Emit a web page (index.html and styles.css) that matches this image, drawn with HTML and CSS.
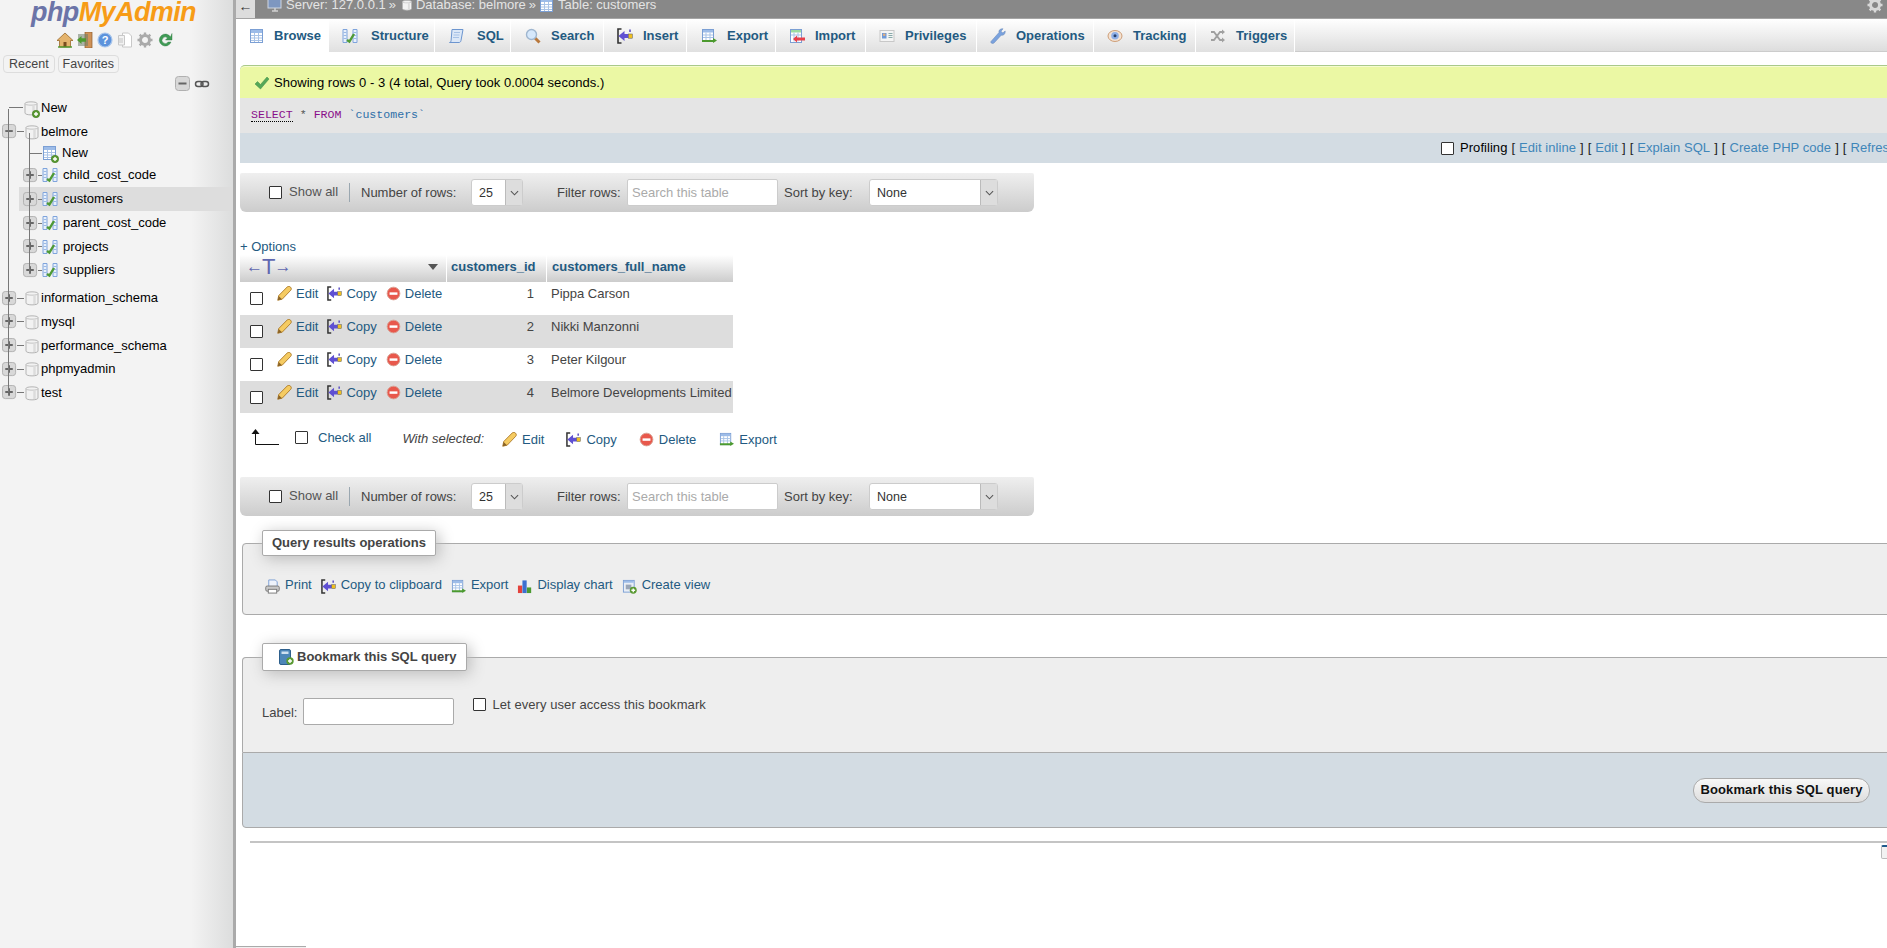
FILE: index.html
```html
<!DOCTYPE html>
<html lang="en">
<head>
<meta charset="utf-8">
<title>phpMyAdmin</title>
<link rel="stylesheet" href="styles.css">
</head>
<body>
<svg class="defs" width="0" height="0">
  <defs>
    <symbol id="plus" viewBox="0 0 16 16"><circle cx="12" cy="12" r="3.7" fill="#5a9a32" stroke="#3f7a20" stroke-width=".6"/><path d="M10 12h4M12 10v4" stroke="#fff" stroke-width="1.4"/></symbol>
    <symbol id="db" viewBox="0 0 16 16"><path d="M2 3.500C2 1.300 14 1.300 14 3.500V13C14 15.500 2 15.500 2 13Z" fill="#f2f2f2" stroke="#b4b4b4"/><path d="M2 3.800C2 5.600 14 5.600 14 3.800" fill="none" stroke="#c4c4c4"/><path d="M10.500 5.500v8.500" stroke="#dcdcdc" stroke-width="2.500"/></symbol>
    <symbol id="minus" viewBox="0 0 16 16"><rect x=".5" y=".5" width="14" height="14" rx="3" fill="#d8d8d8" stroke="#b0b0b0"/><path d="M3.500 7.500h8" stroke="#666" stroke-width="2"/></symbol>
    <symbol id="pls" viewBox="0 0 16 16"><rect x=".5" y=".5" width="14" height="14" rx="3" fill="#d8d8d8" stroke="#b0b0b0"/><path d="M3.500 7.500h8M7.500 3.500v8" stroke="#666" stroke-width="2"/></symbol>
    <symbol id="tbl" viewBox="0 0 16 16"><rect x="1.500" y="1.500" width="12" height="13" fill="#fff" stroke="#7b9fd4"/><path d="M2 2h11v3H2z" fill="#9dbce8"/><path d="M2 7.500h11M2 10h11M2 12.500h11M5.500 5v9M9.500 5v9" stroke="#a9c3e6"/></symbol>
    <symbol id="struct" viewBox="0 0 16 16"><path d="M1 1.500h4v13H1zM11 1.500h4v13h-4z" fill="#e8f0fb" stroke="#7fa4dc"/><path d="M1.500 4.500h3M1.500 7.500h3M1.500 10.500h3M11.500 4.500h3M11.500 7.500h3M11.500 10.500h3" stroke="#9bb9e4"/><path d="M5 12l2.400 1.600L12 6" fill="none" stroke="#4f9a35" stroke-width="2.400"/></symbol>
    <symbol id="sql" viewBox="0 0 16 16"><path d="M4 1.500h11l-2 11c-.3 1.400-1 2-2 2H1.500c1 0 1.500-.8 1.600-2Z" fill="#dbe7f7" stroke="#6c95cf"/><path d="M6 4.500h6M5.500 7h6M5 9.500h6" stroke="#a6c1e6"/></symbol>
    <symbol id="search" viewBox="0 0 16 16"><path d="M9.500 9.500l5 5" stroke="#b9783c" stroke-width="3"/><circle cx="6.500" cy="6.500" r="5" fill="#d6e8fb" stroke="#9fb6cf" stroke-width="1.400"/></symbol>
    <symbol id="insert" viewBox="0 0 16 16"><path d="M4.500 1H1v14h3.500" fill="none" stroke="#333" stroke-width="1.600"/><path d="M1.500 8l6-5v3h4v4h-4v3Z" fill="#5f50d2"/><rect x="11.500" y="6" width="3.800" height="4.200" fill="#f0c020" stroke="#555" stroke-width=".5"/><path d="M13 1.500v2.500" stroke="#5b4fc4" stroke-width="1.600"/></symbol>
    <symbol id="export" viewBox="0 0 16 16"><rect x="1.500" y="1.500" width="11" height="12" fill="#fff" stroke="#7b9fd4"/><path d="M2 2h10v2.500H2z" fill="#9dbce8"/><path d="M2 7h10M2 9.500h10M5 4.500v9M9 4.500v9" stroke="#a9c3e6"/><path d="M1 12h11V10l4 2.500L12 15v-1H1Z" fill="#4c9a2f"/></symbol>
    <symbol id="import" viewBox="0 0 16 16"><rect x="1.500" y="1.500" width="11" height="13" fill="#fff" stroke="#7b9fd4"/><path d="M2 2h10v2.500H2z" fill="#9ddca0"/><path d="M2 7h10M5 4.500v9M9 4.500v9" stroke="#a9c3e6"/><path d="M16 9.500H8V7.500l-4 3.500 4 3.500V12.500h8Z" fill="#e8404a"/></symbol>
    <symbol id="card" viewBox="0 0 16 16"><rect x="1" y="2.500" width="14" height="11" fill="#f4f4f4" stroke="#c8c8c8"/><rect x="3" y="5" width="4.500" height="5.500" fill="#6f9ad8"/><circle cx="5.200" cy="6.800" r="1.300" fill="#e3b080"/><path d="M9.500 5.500h4M9.500 7.500h4M9.500 9.500h4" stroke="#8aa"/></symbol>
    <symbol id="wrench" viewBox="0 0 16 16"><path d="M1 13.500 9 4.500C8.500 2.500 10 .5 13 .8L11 3.200 12.800 5 15.200 3c.3 3-1.700 4.700-4 4.200L4 15c-1.500 1.200-4-.3-3-1.500Z" fill="#7aa2de" stroke="#6e8fbd" stroke-width=".6"/></symbol>
    <symbol id="eye" viewBox="0 0 16 16"><ellipse cx="8" cy="8" rx="7" ry="5.500" fill="#f3e2d3" stroke="#cf9f79"/><circle cx="8" cy="7.800" r="3.800" fill="#8fb0e8"/><circle cx="8" cy="7.800" r="1.500" fill="#27406e"/></symbol>
    <symbol id="shuffle" viewBox="0 0 16 16"><path d="M1 4h3l6 8h3M1 12h3l6-8h3" fill="none" stroke="#a0a0a0" stroke-width="1.800"/><path d="M12 1.500l3 2.500-3 2.500zM12 9.500l3 2.500-3 2.500z" fill="#a0a0a0"/></symbol>
    <symbol id="check" viewBox="0 0 16 16"><path d="M1 9l2.500-2.500L6.500 9.500 13 2l2 2-8.500 10Z" fill="#54a858" stroke="#3f8a45" stroke-width=".5"/></symbol>
    <symbol id="pencil" viewBox="0 0 16 16"><path d="M.8 15.200l1-5L11 .9c1-.8 2.500-.7 3.500.4 1 1 1 2.300.2 3.200L5.600 14Z" fill="#f5cb62" stroke="#a97424" stroke-width=".9"/><path d="M.8 15.200l1-4.500L5.300 14Z" fill="#8a6226"/></symbol>
    <symbol id="del" viewBox="0 0 16 16"><circle cx="8" cy="8" r="6.800" fill="#e8584c" stroke="#d9a093" stroke-width="1"/><rect x="3.800" y="6.800" width="8.400" height="2.600" fill="#fff"/></symbol>
    <symbol id="home" viewBox="0 0 16 16"><path d="M8 1 0 8.500h2.500V15h11V8.500H16Z" fill="#e4b36c" stroke="#9a6a2b" stroke-width=".8"/><path d="M6.500 15v-5h3v5z" fill="#7a4d1e"/><path d="M1 15h14" stroke="#4c9a2f" stroke-width="1.400"/></symbol>
    <symbol id="exit" viewBox="0 0 16 16"><rect x="8" y="0" width="7" height="16" fill="#cf9156" stroke="#8c5c2c" stroke-width=".7"/><rect x="1" y="2" width="10" height="12" fill="#6d7e6a" opacity=".55"/><path d="M0 8l4.500-4v2.200H9v3.600H4.500V12Z" fill="#4c9a2f"/></symbol>
    <symbol id="help" viewBox="0 0 16 16"><circle cx="8" cy="8" r="7" fill="#5d93dc" stroke="#a9c6ec" stroke-width="1.200"/><text x="8" y="12" text-anchor="middle" class="qm">?</text></symbol>
    <symbol id="docs" viewBox="0 0 16 16"><path d="M5.500 1h6l3 3v11h-9z" fill="#fff" stroke="#c8c8c8"/><path d="M1.500 3.500h6v9.500h-6z" fill="#f2f2f2" stroke="#c8c8c8"/><path d="M3 6v5M5 6v5" stroke="#c4c4c4"/></symbol>
    <symbol id="gear" viewBox="0 0 16 16"><circle cx="8" cy="8" r="4.500" fill="none" stroke="#aaa" stroke-width="3"/><path d="M8 .5v3M8 12.500v3M.5 8h3M12.500 8h3M2.700 2.700l2.100 2.100M11.200 11.200l2.100 2.100M2.700 13.300l2.100-2.100M11.200 4.800l2.100-2.100" stroke="#aaa" stroke-width="2.400"/></symbol>
    <symbol id="gearw" viewBox="0 0 16 16"><circle cx="8" cy="8" r="4.500" fill="none" stroke="#d8d8d8" stroke-width="3"/><path d="M8 .5v3M8 12.500v3M.5 8h3M12.500 8h3M2.700 2.700l2.100 2.100M11.200 11.200l2.100 2.100M2.700 13.300l2.100-2.100M11.200 4.800l2.100-2.100" stroke="#d8d8d8" stroke-width="2.400"/></symbol>
    <symbol id="reload" viewBox="0 0 16 16"><path d="M13.500 5A6 6 0 1 0 14 10H11A3.200 3.200 0 1 1 10.500 6L8.500 8H15V1.500Z" fill="#3f9a55" stroke="#2e7a40" stroke-width=".4"/></symbol>
    <symbol id="link" viewBox="0 0 16 16"><rect x="1.500" y="5.500" width="7.500" height="5" rx="2.500" fill="none" stroke="#555" stroke-width="1.500"/><rect x="7" y="5.500" width="7.500" height="5" rx="2.500" fill="none" stroke="#555" stroke-width="1.500"/></symbol>
    <symbol id="print" viewBox="0 0 16 16"><path d="M4 1h7l2 2v5H4z" fill="#eef3fb" stroke="#7b9fd4"/><rect x=".8" y="7.500" width="14.400" height="5.500" rx="1.500" fill="#c8c8c8" stroke="#777"/><rect x="3.500" y="11" width="9" height="4" fill="#fff" stroke="#777"/></symbol>
    <symbol id="chart" viewBox="0 0 16 16"><rect x="1" y="7" width="4.500" height="8" fill="#e3423c"/><rect x="5.800" y="1.500" width="4.500" height="13.500" fill="#3b6fd0"/><rect x="10.600" y="9" width="4.500" height="6" fill="#4a9a30"/></symbol>
    <symbol id="view" viewBox="0 0 16 16"><rect x="1.500" y="1.500" width="11.500" height="12.500" fill="#e9eef6" stroke="#7b9fd4"/><path d="M2 2h10.500v2H2z" fill="#9dbce8"/><rect x="4" y="6" width="6" height="5" fill="#9aa6b8"/><circle cx="12" cy="12" r="3.700" fill="#5a9a32"/><path d="M10 12h4M12 10v4" stroke="#fff" stroke-width="1.400"/></symbol>
    <symbol id="book" viewBox="0 0 16 16"><rect x="1.500" y=".5" width="11" height="15" rx="1.500" fill="#4d86b8" stroke="#2d5f8c"/><rect x="3.500" y="2.500" width="7" height="2.500" fill="#cfe0f0"/><circle cx="12" cy="12" r="3.700" fill="#5a9a32"/><path d="M10 12h4M12 10v4" stroke="#fff" stroke-width="1.400"/></symbol>
    <symbol id="monitor" viewBox="0 0 16 16"><rect x="1" y="1" width="13" height="10" fill="#7e97c0" stroke="#cfd6e0"/><path d="M5 14h6M8 11v3" stroke="#d0d0d0" stroke-width="1.600"/></symbol>
  </defs>
</svg>

<div class="page">
  <aside class="sidebar">
    <div class="logo"><span class="logo-php">php</span><span class="logo-my">MyAdmin</span></div>
    <div class="side-icons">
      <svg class="i16"><use href="#home"/></svg>
      <svg class="i16"><use href="#exit"/></svg>
      <svg class="i16"><use href="#help"/></svg>
      <svg class="i16"><use href="#docs"/></svg>
      <svg class="i16"><use href="#gear"/></svg>
      <svg class="i16"><use href="#reload"/></svg>
    </div>
    <div class="side-tabs"><span class="side-tab">Recent</span><span class="side-tab">Favorites</span></div>
    <div class="side-tools">
      <svg class="i16"><use href="#minus"/></svg>
      <svg class="i16"><use href="#link"/></svg>
    </div>
    <div class="tree">
      <div class="node node-first"><span class="stub stub-long"></span><span class="dbwrap"><svg class="i16"><use href="#db"/></svg><svg class="i16 badge"><use href="#plus"/></svg></span><span class="lbl">New</span></div>
      <div class="node"><svg class="i15"><use href="#minus"/></svg><span class="stub"></span><svg class="i16"><use href="#db"/></svg><span class="lbl">belmore</span></div>
      <div class="sub">
        <div class="leaf leaf-new"><span class="stub stub-new"></span><span class="dbwrap"><svg class="i16"><use href="#tbl"/></svg><svg class="i16 badge"><use href="#plus"/></svg></span><span class="lbl-sub lbl-new">New</span></div>
        <div class="leaf"><svg class="i15"><use href="#pls"/></svg><span class="stub stub-short"></span><svg class="i16"><use href="#struct"/></svg><span class="lbl-sub">child_cost_code</span></div>
        <div class="leaf leaf-active"><svg class="i15"><use href="#pls"/></svg><span class="stub stub-short"></span><svg class="i16"><use href="#struct"/></svg><span class="lbl-sub">customers</span></div>
        <div class="leaf"><svg class="i15"><use href="#pls"/></svg><span class="stub stub-short"></span><svg class="i16"><use href="#struct"/></svg><span class="lbl-sub">parent_cost_code</span></div>
        <div class="leaf"><svg class="i15"><use href="#pls"/></svg><span class="stub stub-short"></span><svg class="i16"><use href="#struct"/></svg><span class="lbl-sub">projects</span></div>
        <div class="leaf"><svg class="i15"><use href="#pls"/></svg><span class="stub stub-short"></span><svg class="i16"><use href="#struct"/></svg><span class="lbl-sub">suppliers</span></div>
      </div>
      <div class="dbs">
        <div class="node"><svg class="i15"><use href="#pls"/></svg><span class="stub"></span><svg class="i16"><use href="#db"/></svg><span class="lbl">information_schema</span></div>
        <div class="node"><svg class="i15"><use href="#pls"/></svg><span class="stub"></span><svg class="i16"><use href="#db"/></svg><span class="lbl">mysql</span></div>
        <div class="node"><svg class="i15"><use href="#pls"/></svg><span class="stub"></span><svg class="i16"><use href="#db"/></svg><span class="lbl">performance_schema</span></div>
        <div class="node"><svg class="i15"><use href="#pls"/></svg><span class="stub"></span><svg class="i16"><use href="#db"/></svg><span class="lbl">phpmyadmin</span></div>
        <div class="node"><svg class="i15"><use href="#pls"/></svg><span class="stub"></span><svg class="i16"><use href="#db"/></svg><span class="lbl">test</span></div>
      </div>
    </div>
  </aside>

  <main class="main">
    <div class="topbar">
      <span class="back">←</span>
      <div class="crumbs">
        <svg class="i16"><use href="#monitor"/></svg><span>Server: 127.0.0.1</span><span>»</span>
        <svg class="i14"><use href="#db"/></svg><span>Database: belmore</span><span>»</span>
        <svg class="i16"><use href="#tbl"/></svg><span>Table: customers</span>
      </div>
      <svg class="i16 top-gear"><use href="#gearw"/></svg>
    </div>

    <nav class="tabs">
      <a class="tab tab-active tab-browse"><svg class="i16"><use href="#tbl"/></svg>Browse</a>
      <a class="tab tab-structure"><svg class="i16"><use href="#struct"/></svg>Structure</a>
      <a class="tab tab-sql"><svg class="i16"><use href="#sql"/></svg>SQL</a>
      <a class="tab tab-search"><svg class="i16"><use href="#search"/></svg>Search</a>
      <a class="tab tab-insert"><svg class="i16"><use href="#insert"/></svg>Insert</a>
      <a class="tab tab-export"><svg class="i16"><use href="#export"/></svg>Export</a>
      <a class="tab tab-import"><svg class="i16"><use href="#import"/></svg>Import</a>
      <a class="tab tab-priv"><svg class="i16"><use href="#card"/></svg>Privileges</a>
      <a class="tab tab-ops"><svg class="i16"><use href="#wrench"/></svg>Operations</a>
      <a class="tab tab-track"><svg class="i16"><use href="#eye"/></svg>Tracking</a>
      <a class="tab tab-trig"><svg class="i16"><use href="#shuffle"/></svg>Triggers</a>
    </nav>

    <div class="content">
      <div class="success"><svg class="i16"><use href="#check"/></svg>Showing rows 0 - 3 (4 total, Query took 0.0004 seconds.)</div>
      <div class="sqlbox"><span class="kw kw-select">SELECT</span> <span class="star">*</span> <span class="kw">FROM</span> <span class="ident">`customers`</span></div>
      <div class="sqllinks"><input class="cb" type="checkbox"><span class="profiling">Profiling</span>
        <span class="brk">[</span> <a>Edit inline</a> <span class="brk">]</span> <span class="brk">[</span> <a>Edit</a> <span class="brk">]</span> <span class="brk">[</span> <a>Explain SQL</a> <span class="brk">]</span> <span class="brk">[</span> <a>Create PHP code</a> <span class="brk">]</span> <span class="brk">[</span> <a>Refresh</a> <span class="brk">]</span>
      </div>

      <div class="navbox">
        <input class="cb" type="checkbox"><span class="showall">Show all</span><span class="sep"></span>
        <span class="nrows">Number of rows:</span>
        <span class="select sel-rows"><span>25</span><span class="sel-arrow"><svg class="chev" viewBox="0 0 10 6"><path d="M1 1l4 4 4-4" fill="none" stroke="#555" stroke-width="1.200"/></svg></span></span>
        <span class="filter">Filter rows:</span>
        <input class="search-in" placeholder="Search this table">
        <span class="sortkey">Sort by key:</span>
        <span class="select sel-sort"><span>None</span><span class="sel-arrow"><svg class="chev" viewBox="0 0 10 6"><path d="M1 1l4 4 4-4" fill="none" stroke="#555" stroke-width="1.200"/></svg></span></span>
      </div>

      <a class="options">+ Options</a>

      <table class="data">
        <colgroup><col class="c1"><col class="c2"><col class="c3"></colgroup>
        <thead>
          <tr>
            <th class="th-act"><span class="thwrap"><span class="resize">←<span class="bigt">T</span>→</span><span class="tri"></span></span></th>
            <th>customers_id</th>
            <th>customers_full_name</th>
          </tr>
        </thead>
        <tbody>
          <tr>
            <td class="act"><div class="acts"><input class="cb" type="checkbox"><a class="a-edit"><svg class="i15"><use href="#pencil"/></svg>Edit</a><a class="a-copy"><svg class="i15"><use href="#insert"/></svg>Copy</a><a class="a-del"><svg class="i15"><use href="#del"/></svg>Delete</a></div></td>
            <td class="num">1</td><td class="name">Pippa Carson</td>
          </tr>
          <tr class="alt">
            <td class="act"><div class="acts"><input class="cb" type="checkbox"><a class="a-edit"><svg class="i15"><use href="#pencil"/></svg>Edit</a><a class="a-copy"><svg class="i15"><use href="#insert"/></svg>Copy</a><a class="a-del"><svg class="i15"><use href="#del"/></svg>Delete</a></div></td>
            <td class="num">2</td><td class="name">Nikki Manzonni</td>
          </tr>
          <tr>
            <td class="act"><div class="acts"><input class="cb" type="checkbox"><a class="a-edit"><svg class="i15"><use href="#pencil"/></svg>Edit</a><a class="a-copy"><svg class="i15"><use href="#insert"/></svg>Copy</a><a class="a-del"><svg class="i15"><use href="#del"/></svg>Delete</a></div></td>
            <td class="num">3</td><td class="name">Peter Kilgour</td>
          </tr>
          <tr class="alt">
            <td class="act"><div class="acts"><input class="cb" type="checkbox"><a class="a-edit"><svg class="i15"><use href="#pencil"/></svg>Edit</a><a class="a-copy"><svg class="i15"><use href="#insert"/></svg>Copy</a><a class="a-del"><svg class="i15"><use href="#del"/></svg>Delete</a></div></td>
            <td class="num">4</td><td class="name">Belmore Developments Limited</td>
          </tr>
        </tbody>
      </table>

      <div class="bulk">
        <svg class="arrow" viewBox="0 0 28 16"><path d="M4.500 15.500V3M4.500 15.500H28" fill="none" stroke="#111" stroke-width="1"/><path d="M.5 5 4.500 0l4 5Z" fill="#111"/></svg>
        <input class="cb" type="checkbox"><a class="checkall">Check all</a>
        <em class="withsel">With selected:</em>
        <a class="bulk-item b-edit"><svg class="i15"><use href="#pencil"/></svg>Edit</a>
        <a class="bulk-item b-copy"><svg class="i15"><use href="#insert"/></svg>Copy</a>
        <a class="bulk-item b-del"><svg class="i15"><use href="#del"/></svg>Delete</a>
        <a class="bulk-item b-exp"><svg class="i15"><use href="#export"/></svg>Export</a>
      </div>

      <div class="navbox">
        <input class="cb" type="checkbox"><span class="showall">Show all</span><span class="sep"></span>
        <span class="nrows">Number of rows:</span>
        <span class="select sel-rows"><span>25</span><span class="sel-arrow"><svg class="chev" viewBox="0 0 10 6"><path d="M1 1l4 4 4-4" fill="none" stroke="#555" stroke-width="1.200"/></svg></span></span>
        <span class="filter">Filter rows:</span>
        <input class="search-in" placeholder="Search this table">
        <span class="sortkey">Sort by key:</span>
        <span class="select sel-sort"><span>None</span><span class="sel-arrow"><svg class="chev" viewBox="0 0 10 6"><path d="M1 1l4 4 4-4" fill="none" stroke="#555" stroke-width="1.200"/></svg></span></span>
      </div>

      <fieldset class="fs fs-ops">
        <legend>Query results operations</legend>
        <div class="ops">
          <a><svg class="i15"><use href="#print"/></svg>Print</a>
          <a><svg class="i15"><use href="#insert"/></svg>Copy to clipboard</a>
          <a><svg class="i15"><use href="#export"/></svg>Export</a>
          <a><svg class="i15"><use href="#chart"/></svg>Display chart</a>
          <a><svg class="i15"><use href="#view"/></svg>Create view</a>
        </div>
      </fieldset>

      <fieldset class="fs fs-book">
        <legend><svg class="i16"><use href="#book"/></svg>Bookmark this SQL query</legend>
        <div class="bookrow">
          <label class="lab">Label:</label><input class="labelin">
          <input class="cb cb-share" type="checkbox"><span class="share">Let every user access this bookmark</span>
        </div>
      </fieldset>
      <div class="tfoot"><button class="btn" type="button">Bookmark this SQL query</button></div>

      <div class="rule"></div>
      <div class="tiny"></div>
    </div>
  </main>
</div>
<div class="console-tab"></div>
</body>
</html>
```
FILE: styles.css
```css
* { box-sizing: border-box; }
html, body { margin: 0; height: 948px; overflow: hidden; background: #fff; }
body { font: 13px/16px "Liberation Sans", Arial, sans-serif; color: #444; }
a { color: #235a81; text-decoration: none; }
.defs { position: absolute; }
.qm { font: bold 11px "Liberation Sans", sans-serif; fill: #fff; }

svg { flex: none; display: block; }
.i16 { width: 16px; height: 16px; }
.i15 { width: 15px; height: 15px; }
.i14 { width: 14px; height: 14px; }

.page { display: flex; width: 1960px; height: 948px; }

/* sidebar */
.sidebar {
  flex: 0 0 236px; height: 948px; overflow: hidden;
  background: linear-gradient(to right, #f3f3f3 82%, #dcdddd 100%);
  background-size: 233px 100%; background-repeat: no-repeat;
  border-right: 3px solid #aaa; color: #000;
}
.logo { height: 29px; padding-left: 31px; font: italic bold 27px/24px "Liberation Sans", sans-serif; letter-spacing: -.6px; white-space: nowrap; }
.logo-php { color: #6b74a8; }
.logo-my { color: #f79c17; }
.side-icons { display: flex; gap: 4px; padding: 3px 0 0 57px; height: 24px; }
.side-tabs { display: flex; gap: 3px; margin-top: 2px; padding-left: 3px; height: 18px; }
.side-tab { border: 1px solid #ddd; border-radius: 4px; padding: 0 5px; line-height: 16px; color: #444; font-size: 12.500px; }
.side-tab + .side-tab { padding: 0 4px; }
.side-tools { display: flex; gap: 3px; padding: 3px 0 0 175px; height: 22px; }
.tree { position: relative; padding-top: 1px; }
.tree::before { content: ""; position: absolute; left: 8px; top: 14px; height: 283px; border-left: 1px solid #777; }
.node, .leaf { display: flex; align-items: center; white-space: nowrap; }
.node { height: 23.700px; padding-left: 2px; }
.node-first { padding-left: 9px; }
.leaf { height: 23.500px; padding-left: 23px; }
.leaf-new { height: 20px; padding-left: 30px; }
.leaf-active { background: #ddd; margin-left: 19px; padding-left: 4px; height: 24.500px; }
.sub { position: relative; }
.sub::before { content: ""; position: absolute; left: 29px; top: -10px; height: 138px; border-left: 1px solid #777; }
.dbs { margin-top: 4.500px; }
.stub { width: 7px; border-top: 1px solid #777; flex: none; }
.stub-long { width: 14px; }
.stub-new { width: 12px; }
.stub-short { width: 4px; }
.dbwrap { position: relative; display: block; flex: none; width: 16px; height: 16px; }
.badge { position: absolute; left: 1px; top: 2px; }
.lbl { margin-left: 2px; }
.i15 + .stub + .i16 + .lbl { margin-left: 1px; }
.lbl-sub { margin-left: 5px; }
.lbl-new { margin-left: 4px; }

/* main */
.main { flex: 0 0 1724px; min-width: 0; }
.topbar { height: 19px; background: #888; border-bottom: 1px solid #a5a5a5; display: flex; overflow: hidden; color: #e4e4e4; }
.back { width: 19px; height: 18px; background: #ddd; color: #333; text-align: center; line-height: 13px; font-size: 14px; flex: none; }
.crumbs { display: flex; gap: 3px; margin: -3px 0 0 12px; height: 16px; white-space: nowrap; }
.crumbs .i14 { width: 12px; margin-left: 2px; margin-top: 1px; }
.top-gear { margin: -3px 77px 0 auto; }

.tabs { display: flex; height: 33px; background: linear-gradient(#fff, #ddd); border-bottom: 1px solid #ccc; font-weight: bold; color: #235a81; }
.tab { display: flex; align-items: center; gap: 10px; height: 33px; padding-left: 13px; border-right: 1px solid #fff; color: #235a81; background: linear-gradient(#fff, #e0e0e0); white-space: nowrap; }
.tab-browse { width: 93px; gap: 9px; }
.tab-structure { width: 106px; gap: 13px; }
.tab-sql { width: 76px; gap: 13px; }
.tab-search { width: 93px; padding-left: 14px; }
.tab-insert { width: 83px; }
.tab-export { width: 89px; padding-left: 14px; }
.tab-import { width: 90px; }
.tab-priv { width: 111px; }
.tab-ops { width: 117px; }
.tab-track { width: 102px; }
.tab-trig { width: 99px; padding-left: 14px; }
.tab-active { background: #fff; height: 34px; }

.content { padding: 13px 0 0 4px; }
.success { display: flex; align-items: center; gap: 4px; height: 33px; padding: 2px 0 0 14px; background: #ebf8a4; border-top: 1px solid #a9c98a; border-top-left-radius: 5px; box-shadow: inset 0 1px 0 #f6fccf; color: #000; letter-spacing: .04px; }
.sqlbox { height: 35px; background: #e5e5e5; padding: 9px 0 0 11px; font: 11.600px/16px "Liberation Mono", monospace; color: #555; white-space: pre; }
.kw { color: #8a0f8a; }
.kw-select { border-bottom: 1px dotted #000; }
.ident { color: #2e6fa8; }
.sqllinks { display: flex; align-items: center; gap: 4px; height: 30px; background: #d3dce3; padding-left: 1201px; white-space: pre; color: #111; letter-spacing: .05px; }
.sqllinks .cb { margin-right: 2px; }
.sqllinks a { color: #3f86b9; }
.profiling { color: #000; }
.brk { color: #222; }
.cb { appearance: none; -webkit-appearance: none; flex: none; width: 13px; height: 13px; margin: 0; border: 1px solid #333; background: #fff; border-radius: 1px; }

.navbox { display: flex; align-items: center; width: 794px; height: 39px; margin-top: 10px; padding-left: 29px; background: linear-gradient(#efefef, #ccc); border-radius: 2px 2px 6px 6px; white-space: nowrap; }
.navbox .cb { margin-top: -1px; }
.showall { margin: -2px 0 0 7px; color: #555; width: 47px; }
.sep { width: 1px; height: 19px; background: #9aa7b0; margin: 0 11px 0 13px; }
.nrows { width: 110px; }
.select { display: flex; height: 27px; background: #fff; border: 1px solid #ccc; border-radius: 3px; align-items: center; padding: 1px 0 0 7px; color: #333; font-size: 12.500px; }
.sel-rows { width: 52px; }
.sel-sort { width: 129px; margin-left: 25px; }
.sel-arrow { margin-left: auto; width: 17px; height: 25px; margin-top: -1px; background: #ddd; border-left: 1px solid #bbb; display: flex; align-items: center; justify-content: center; }
.chev { width: 9px; height: 6px; }
.filter { margin-left: 34px; width: 70px; }
.search-in { width: 151px; height: 27px; border: 1px solid #ccc; border-radius: 2px; padding: 0 4px; font: 13px "Liberation Sans", sans-serif; background: #fff; }
.search-in::placeholder { color: #aaa; }
.sortkey { margin-left: 6px; width: 60px; }

.options { display: block; margin-top: 27px; height: 16px; }

.data { border-collapse: separate; border-spacing: 0; table-layout: fixed; width: 493px; }
.c1 { width: 206px; }
.c2 { width: 100px; }
.c3 { width: 187px; }
.data th { height: 27px; padding: 0 0 4px 4px; text-align: left; color: #235a81; background: linear-gradient(#fff, #ccc); border-left: 1px solid #fff; }
.data th + th + th { padding-left: 5px; }
.data th.th-act { border-left: 0; padding: 0 0 3px; }
.thwrap { display: flex; align-items: center; justify-content: space-between; padding: 0 8px 0 6px; }
.resize { color: #6067b0; font-size: 17px; line-height: 18px; display: flex; align-items: center; font-weight: normal; }
.bigt { font-size: 22px; font-weight: normal; margin: 0 -1px; }
.tri { width: 0; height: 0; border: 5.500px solid transparent; border-top: 6px solid #555; border-bottom: 0; }
.data td { height: 33px; padding: 0; vertical-align: top; }
.data tr.alt td { background: #ddd; height: 32.500px; }
.acts { display: flex; padding: 3px 0 0 10px; }
.acts .cb { margin: 7px 14px 0 0; }
.acts a { display: flex; align-items: flex-start; gap: 4px; padding-top: 1px; }
.acts .a-copy { margin-left: 9px; }
.acts .a-del { margin-left: 9px; }
.num { text-align: right; padding: 4px 12px 0 0 !important; }
.name { padding: 4px 0 0 5px !important; white-space: nowrap; }

.bulk { display: flex; align-items: flex-start; height: 54px; padding: 16px 0 0 11px; white-space: nowrap; }
.arrow { width: 28px; height: 16px; }
.bulk .cb { margin: 2px 0 0 16px; }
.checkall { margin: 1px 0 0 10px; }
.withsel { margin: 2px 0 0 31px; color: #444; }
.bulk-item { display: flex; gap: 5px; margin-top: 3px; }
.b-edit { margin-left: 18px; }
.b-copy { margin-left: 22px; }
.b-del { margin-left: 22px; }
.b-exp { margin-left: 23px; }

.fs { margin: 14px 0 0 2px; min-width: 0; border: 1px solid #aaa; background: #eee; border-radius: 4px 0 0 4px; padding: 0 0 0 19px; }
.fs legend { display: flex; align-items: center; gap: 3px; margin: 0; padding: 0 9px; height: 26px; background: #fff; border: 1px solid #aaa; border-radius: 2px; font-weight: bold; box-shadow: 3px 3px 15px #bbb; color: #444; }
.ops { display: flex; gap: 9px; padding: 21px 0 19px 3px; height: 58px; }
.ops a { display: flex; gap: 5px; height: 18px; }
.ops svg { margin-top: 2px; }
.fs-book { margin-top: 28px; border-bottom: 0; border-radius: 4px 0 0 0; }
.fs-book legend { height: 28px; padding: 0 10px 0 15px; }
.bookrow { display: flex; align-items: flex-start; padding: 27px 0 27px 0; height: 81px; }
.lab { margin: 7px 6px 0 0; }
.labelin { width: 151px; height: 27px; border: 1px solid #aaa; border-radius: 2px; background: #fff; }
.cb-share { margin-left: 19px; }
.share { margin: -1px 0 0 6px; letter-spacing: .07px; }
.tfoot { display: flex; justify-content: flex-end; align-items: center; height: 76px; margin-left: 2px; padding-right: 89px; background: #d3dce3; border: 1px solid #aaa; border-radius: 0 0 0 4px; }
.btn { width: 177px; height: 25px; padding: 0; border: 1px solid #aaa; border-radius: 12px; background: linear-gradient(#f8f8f8, #ddd); font: bold 13px/16px "Liberation Sans", sans-serif; letter-spacing: .12px; color: #111; white-space: nowrap; }
.rule { height: 2px; margin: 13px 0 0 10px; background: #c4c4c4; }
.tiny { width: 14px; height: 14px; margin: 2px 0 0 1641px; border: 1px solid #bbb; border-top: 2px solid #1f5a8c; background: #f2f2f2; border-radius: 2px 0 0 2px; }

.console-tab { position: absolute; left: 236px; bottom: 0; width: 70px; height: 2px; background: #f0f0f0; border-top: 1px solid #aaa; }
```
